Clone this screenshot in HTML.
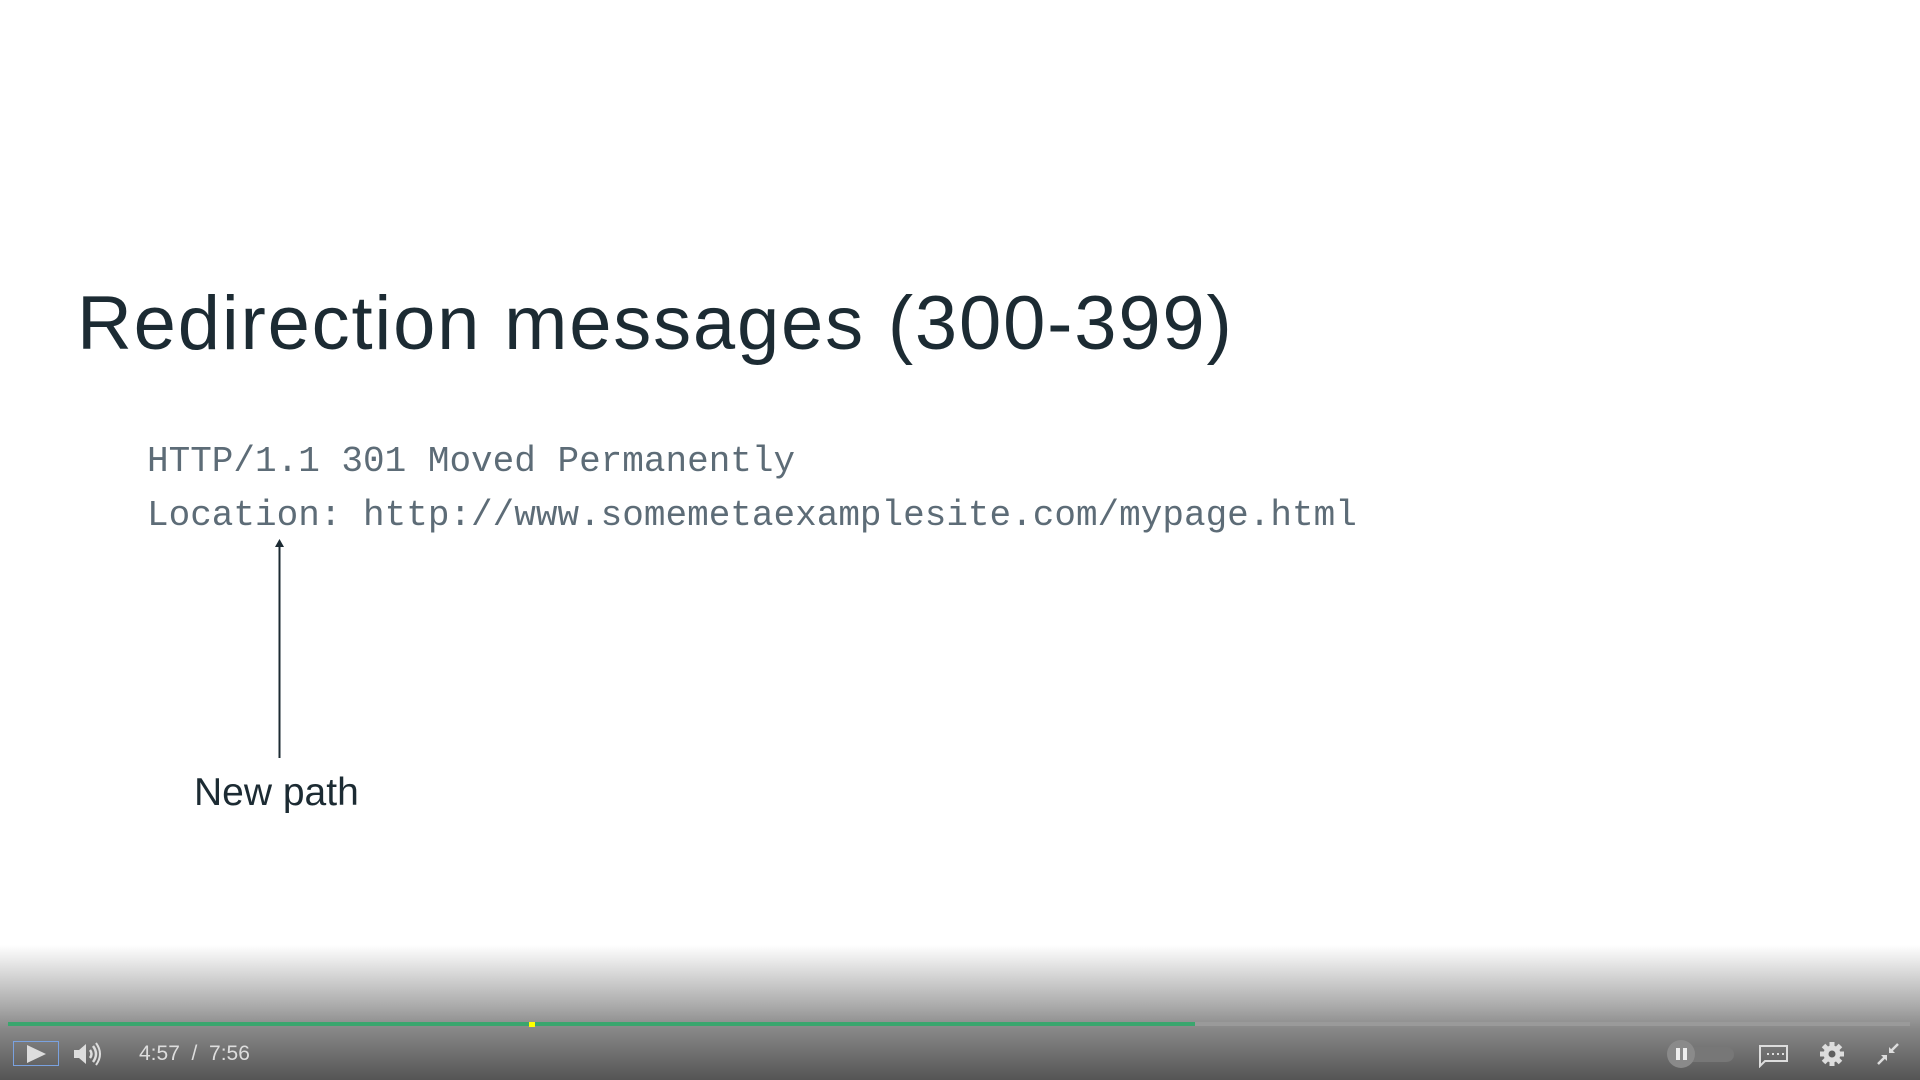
<!DOCTYPE html>
<html><head><meta charset="utf-8"><style>
html,body{margin:0;padding:0;width:1920px;height:1080px;overflow:hidden;background:#fff;}
body{position:relative;font-family:"Liberation Sans",sans-serif;}
.t{position:absolute;white-space:nowrap;}
#title{left:77px;top:274px;font-size:76px;color:#1c2b33;line-height:100px;letter-spacing:1.8px;}
.code{font-family:"Liberation Mono",monospace;font-size:36px;color:#5d6c77;left:147px;line-height:40px;}
#np{left:194px;top:771px;font-size:39px;color:#1c2b33;line-height:44px;}
#grad{position:absolute;left:0;top:945px;width:1920px;height:135px;background:linear-gradient(to bottom,rgba(255,255,255,0) 0%,#ababab 45%,#888 62%,#555 100%);}
</style></head><body>
<div class="t" id="title">Redirection messages (300-399)</div>
<div class="t code" style="top:442px">HTTP/1.1 301 Moved Permanently</div>
<div class="t code" style="top:496px">Location: http://www.somemetaexamplesite.com/mypage.html</div>
<svg style="position:absolute;left:270px;top:538px" width="20" height="222"><line x1="9.5" y1="6" x2="9.5" y2="220" stroke="#1c2b33" stroke-width="2"/><path d="M5 9 L9.5 1 L14 9 Z" fill="#1c2b33"/></svg>
<div class="t" id="np">New path</div>
<div id="grad"></div>
<div style="position:absolute;left:8px;top:1022px;width:1902px;height:4px;background:#9a9a9a"></div>
<div style="position:absolute;left:8px;top:1022px;width:1187px;height:4px;background:#3aa66e"></div>
<div style="position:absolute;left:529px;top:1022px;width:6px;height:5px;background:#ffff00"></div>
<div style="position:absolute;left:13px;top:1041px;width:46px;height:25px;border:1.5px solid #7aa2e0;box-sizing:border-box"></div>
<svg style="position:absolute;left:26px;top:1044px" width="22" height="20"><path d="M1 1 L20 10 L1 19 Z" fill="#ddd"/></svg>
<svg style="position:absolute;left:73px;top:1042px" width="30" height="24"><path d="M1 8 H6 L13 2 V22 L6 16 H1 Z" fill="#ddd"/><path d="M17 8 Q20 12 17 16" stroke="#ddd" stroke-width="2.5" fill="none"/><path d="M20 4 Q26 12 20 20" stroke="#ddd" stroke-width="2.5" fill="none"/><path d="M23 1 Q31 12 23 23" stroke="#ddd" stroke-width="2" fill="none"/></svg>
<div class="t" style="left:139px;top:1042px;font-size:21px;color:#ddd;line-height:24px">4:57 &nbsp;/ &nbsp;7:56</div>
<div style="position:absolute;left:1680px;top:1047px;width:54px;height:15px;border-radius:8px;background:#777"></div>
<div style="position:absolute;left:1667px;top:1040px;width:28px;height:28px;border-radius:50%;background:#8a8a8a"></div>
<div style="position:absolute;left:1676px;top:1048px;width:4px;height:12px;background:#eee"></div>
<div style="position:absolute;left:1683px;top:1048px;width:4px;height:12px;background:#eee"></div>
<svg style="position:absolute;left:1758px;top:1044px" width="32" height="24"><path d="M2 2 H29 V17 H7 L2 22 Z" stroke="#ddd" stroke-width="2" fill="none"/><g fill="#ddd"><rect x="9" y="9" width="2" height="2"/><rect x="14" y="9" width="2" height="2"/><rect x="19" y="9" width="2" height="2"/><rect x="24" y="9" width="2" height="2"/></g></svg>
<svg style="position:absolute;left:1819px;top:1041px" width="26" height="26" viewBox="0 0 26 26"><g fill="#ddd"><circle cx="13" cy="13" r="8.5"/><rect x="10.5" y="1" width="5" height="24"/><rect x="1" y="10.5" width="24" height="5"/><rect x="10.5" y="1" width="5" height="24" transform="rotate(45 13 13)"/><rect x="10.5" y="1" width="5" height="24" transform="rotate(-45 13 13)"/></g><circle cx="13" cy="13" r="3.5" fill="#5e5e5e"/></svg>
<svg style="position:absolute;left:1875px;top:1041px" width="26" height="26"><g stroke="#ddd" stroke-width="2.5" fill="none"><line x1="3" y1="23" x2="10" y2="16"/><line x1="16" y1="10" x2="23" y2="3"/></g><path d="M6 14 H12 V20 Z" fill="#ddd"/><path d="M14 6 V12 H20 Z" fill="#ddd"/></svg>
</body></html>
